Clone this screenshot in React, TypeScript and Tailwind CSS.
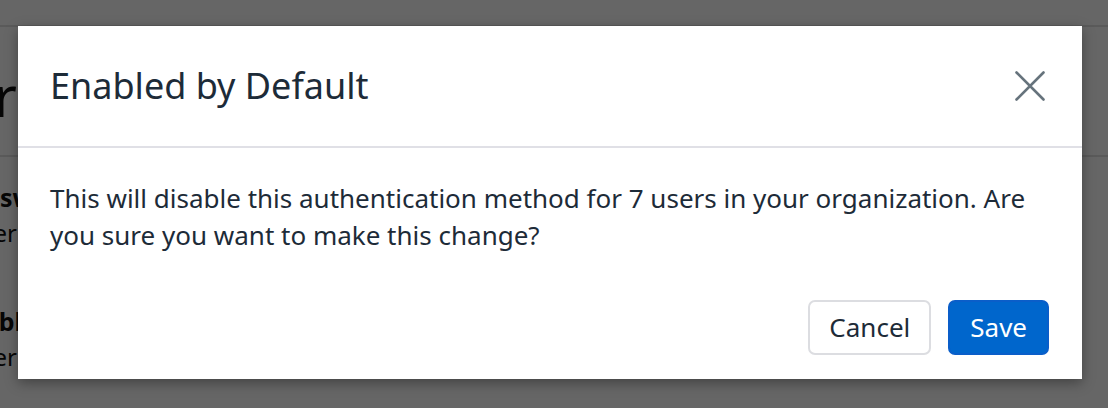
import React from "react";

export default function App() {
  return (
    <div
      className="relative w-[1108px] h-[408px] overflow-hidden bg-white text-[#111]"
      style={{ fontFamily: '"Noto Sans", "Open Sans", sans-serif' }}
    >
      {/* page behind the modal */}
      <div className="h-[27px] border-b-2 border-[#e2e2e2]" />
      <div className="h-[130px] border-b-2 border-[#e2e2e2] flex items-center">
        <div className="w-[17px] flex justify-end overflow-hidden pt-[8px]">
          <span className="text-[56px] leading-[64px] whitespace-nowrap">Authenticator</span>
        </div>
      </div>
      <div className="flex flex-col pt-[22px]">
        <div className="w-[60px] flex justify-end overflow-hidden">
          <span className="text-[25px] leading-[36px] font-bold whitespace-nowrap">Answer</span>
        </div>
        <div className="w-[17px] flex justify-end overflow-hidden">
          <span className="text-[24px] leading-[36px] whitespace-nowrap">Enter</span>
        </div>
        <div className="h-[52px]" />
        <div className="w-[37px] flex justify-end overflow-hidden">
          <span className="text-[25px] leading-[36px] font-bold whitespace-nowrap">Enable</span>
        </div>
        <div className="w-[17px] flex justify-end overflow-hidden">
          <span className="text-[24px] leading-[36px] whitespace-nowrap">Enter</span>
        </div>
      </div>

      {/* overlay */}
      <div className="absolute inset-0 bg-black/60" />

      {/* modal */}
      <div className="absolute inset-0 pl-[18px] pt-[26px]">
        <div className="w-[1064px] h-[353px] bg-white shadow-[0_4px_12px_rgba(0,0,0,0.35)] flex flex-col text-[#1d2b38]">
          <div className="h-[122px] border-b-2 border-[#e0e0e6] flex items-center justify-between pl-8 pr-[36px]">
            <h2 className="text-[36px] leading-[48px] font-normal">Enabled by Default</h2>
            <button className="w-8 h-8 flex items-center justify-center" aria-label="Close">
              <svg width="32" height="32" viewBox="0 0 32 32" fill="none">
                <path d="M2.5 2.5 L29.5 29.5 M29.5 2.5 L2.5 29.5" stroke="#66737c" strokeWidth="2.6" strokeLinecap="round" />
              </svg>
            </button>
          </div>
          <div className="px-8 pt-[32px]">
            <p className="text-[26px] leading-[37px]">
              This will disable this authentication method for 7 users in your organization. Are you sure you want to make this change?
            </p>
          </div>
          <div className="flex justify-end gap-[17px] px-[33px] pt-[46px]">
            <button className="h-[55px] px-[19px] rounded-[7px] border-2 border-[#dcdde1] bg-white text-[26px] text-[#1d2b38]">
              Cancel
            </button>
            <button className="h-[55px] px-[20px] rounded-[7px] border-2 border-[#0a5ec9] bg-[#0066cc] text-[26px] text-white">
              Save
            </button>
          </div>
        </div>
      </div>
    </div>
  );
}
